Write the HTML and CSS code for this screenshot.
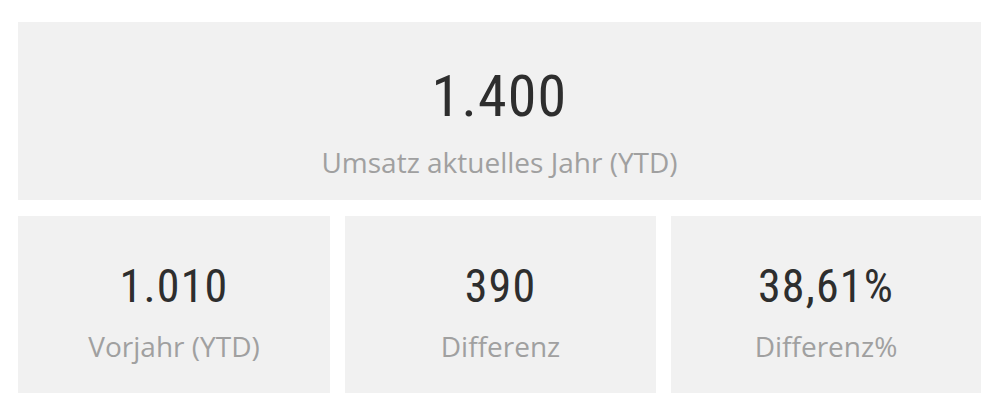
FILE: index.html
```html
<!DOCTYPE html>
<html lang="de">
<head>
<meta charset="utf-8">
<title>Umsatz KPI</title>
<link rel="stylesheet" href="styles.css">
</head>
<body>
<main class="dashboard">
  <section class="card card-main">
    <div class="value value-lg">1.400</div>
    <div class="label">Umsatz aktuelles Jahr (YTD)</div>
  </section>
  <div class="row">
    <section class="card">
      <div class="value">1.010</div>
      <div class="label">Vorjahr (YTD)</div>
    </section>
    <section class="card">
      <div class="value">390</div>
      <div class="label">Differenz</div>
    </section>
    <section class="card">
      <div class="value">38,61%</div>
      <div class="label">Differenz%</div>
    </section>
  </div>
</main>
</body>
</html>
```
FILE: styles.css
```css
html, body {
  margin: 0;
  padding: 0;
  background: #ffffff;
}

.dashboard {
  width: 963px;
  padding: 22px 0 0 18px;
  display: flex;
  flex-direction: column;
  gap: 16px;
}

.row {
  display: grid;
  grid-template-columns: 312px 311px 310px;
  column-gap: 15px;
}

.card {
  background: #f1f1f1;
  height: 177px;
  box-sizing: border-box;
  padding-top: 47px;
  display: flex;
  flex-direction: column;
  align-items: center;
}

.card-main {
  height: 178px;
  padding-top: 45px;
}

.value {
  font-family: "Roboto Condensed", "DejaVu Sans Condensed", sans-serif;
  font-size: 46px;
  line-height: 46px;
  color: #2e2e2e;
  letter-spacing: 1.2px;
}

.value-lg {
  font-size: 58px;
  line-height: 58px;
  letter-spacing: 1.2px;
}

.label {
  font-family: "Open Sans", "Noto Sans", sans-serif;
  font-size: 28px;
  line-height: 34px;
  color: #a0a0a0;
  margin-top: 20px;
}
```
